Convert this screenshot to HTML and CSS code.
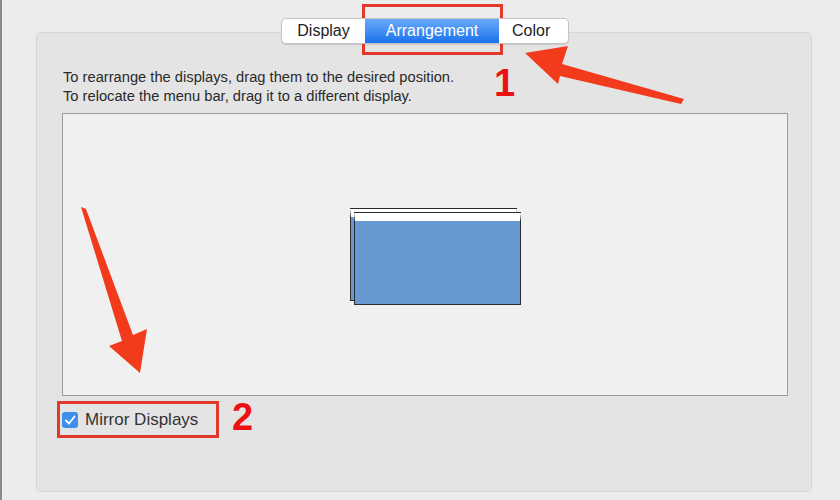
FILE: index.html
```html
<!DOCTYPE HTML>
<html>
<head>
<title>Arrangement</title>
<meta name="viewport" content="width=device-width, initial-scale=1">
<link rel="stylesheet" href="styles.css">
</head>
<body>
<div class="window">
  <div class="tabs">
    <span class="tab">Display</span>
    <span class="tab active">Arrangement</span>
    <span class="tab">Color</span>
  </div>

  <div class="panel">
    <p class="hint">To rearrange the displays, drag them to the desired position.<br>
    To relocate the menu bar, drag it to a different display.</p>

    <div class="well">
      <div class="screen back"></div>
      <div class="screen front"></div>
    </div>

    <label class="mirror">
      <span class="check">
        <svg width="16" height="16" viewBox="0 0 16 16"><path d="M4 8.5 L7 11.5 L12.5 4.5" fill="none" stroke="#fff" stroke-width="1.8" stroke-linecap="round" stroke-linejoin="round"/></svg>
      </span>
      Mirror Displays
    </label>
  </div>

  <!-- annotations -->
  <div class="mark mark-tab"></div>
  <div class="mark mark-check"></div>
  <span class="num num1">1</span>
  <span class="num num2">2</span>
  <svg class="arrows" width="840" height="500" viewBox="0 0 840 500">
    <polygon fill="#f23a1c" points="682,99 679,104 558,76 556,84 523,53 566,46 560,64"/>
    <polygon fill="#f23a1c" points="79,207 84,209 131,335 145,329 138,373 107,346 120,341"/>
  </svg>
</div>
</body>
</html>
```

FILE: styles.css
```css
html, body {
  margin: 0;
  padding: 0;
}
body {
  background: #ececec;
  font-family: "Liberation Sans", Arial, sans-serif;
  color: #262626;
}
.window {
  position: relative;
  width: 840px;
  height: 500px;
  padding: 18px 0 0 34px;
  box-sizing: border-box;
  border-left: 2px solid #8a8a8a;
}
.tabs {
  position: relative;
  z-index: 2;
  display: flex;
  width: 286px;
  height: 24px;
  margin: 0 0 -12px 245px;
  background: #fff;
  border: 1px solid #c4c4c4;
  border-radius: 5px;
  box-shadow: 0 1px 1px rgba(0,0,0,0.12);
}
.tab {
  display: flex;
  align-items: center;
  justify-content: center;
  font-size: 16px;
  color: #222;
  padding: 0 13px;
}
.tab:first-child { width: 57px; }
.tab.active {
  width: 108px;
  color: #fff;
  background: -webkit-linear-gradient(top, #69aaf8, #1a72ee);
}
.panel {
  width: 776px;
  height: 460px;
  box-sizing: border-box;
  padding: 35px 0 0 25px;
  background: #e4e4e4;
  border: 1px solid #d6d6d6;
  border-radius: 5px;
}
.hint {
  margin: 0 0 7px 1px;
  font-size: 14.7px;
  line-height: 19px;
  color: #2a2a2a;
}
.well {
  position: relative;
  width: 724px;
  height: 281px;
  background: #f0f0f0;
  border: 1px solid #9c9c9c;
}
.screen {
  position: absolute;
  width: 167px;
  height: 92px;
  box-sizing: border-box;
  background: #6699d2;
  border: 1px solid #2b2b2b;
  border-top-width: 8px;
  border-top-color: #fff;
  box-shadow: 0 -1px 0 #2b2b2b;
}
.screen.back {
  left: 287px;
  top: 95px;
}
.screen.front {
  left: 291px;
  top: 99px;
}
.mirror {
  display: flex;
  align-items: center;
  gap: 7px;
  margin: 14px 0 0 0;
  font-size: 17px;
  color: #333;
}
.check {
  display: flex;
  width: 16px;
  height: 16px;
  border-radius: 3px;
  background: #3d8fe9;
}
.mark {
  position: absolute;
  border: 3px solid #e23a2a;
  box-sizing: border-box;
}
.mark-tab {
  left: 360px;
  top: 4px;
  width: 141px;
  height: 51px;
}
.mark-check {
  left: 55px;
  top: 401px;
  width: 162px;
  height: 37px;
}
.num {
  position: absolute;
  font-size: 38px;
  font-weight: bold;
  color: #ee1111;
  line-height: 1;
}
.num1 { left: 492px; top: 64px; }
.num2 { left: 230px; top: 398px; }
.arrows {
  position: absolute;
  left: 0;
  top: 0;
  pointer-events: none;
}
```
